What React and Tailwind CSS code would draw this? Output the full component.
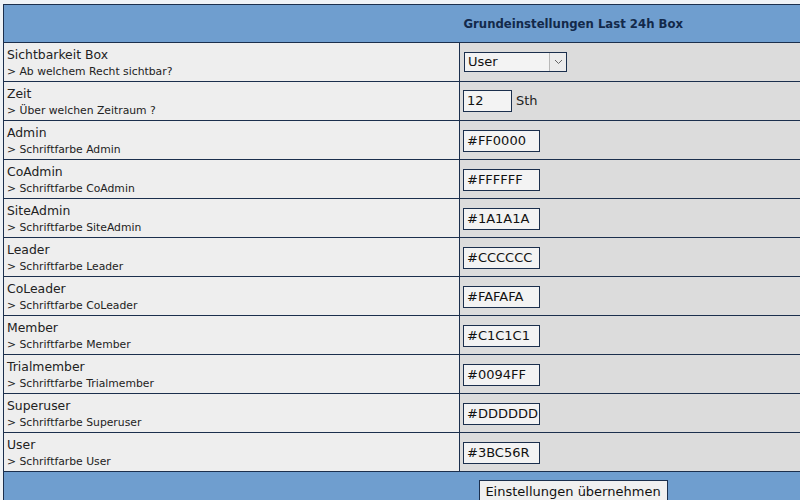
import { useState } from 'react'

const COLORS = [
  ['Admin', '#FF0000'],
  ['CoAdmin', '#FFFFFF'],
  ['SiteAdmin', '#1A1A1A'],
  ['Leader', '#CCCCCC'],
  ['CoLeader', '#FAFAFA'],
  ['Member', '#C1C1C1'],
  ['Trialmember', '#0094FF'],
  ['Superuser', '#DDDDDD'],
  ['User', '#3BC56R'],
]

const Label = ({ title, sub }) => (
  <td className="w-[456px] bg-[#eeeeee] border-t border-r border-[#1b2f4d] px-[3px] align-top pt-[4px] h-[39px]">
    <div className="text-[12.4px] leading-[16px] text-[#222]">{title}</div>
    <div className="text-[10.8px] leading-[17px] text-[#222]">{sub}</div>
  </td>
)

export default function App() {
  const [values, setValues] = useState(Object.fromEntries(COLORS))

  return (
    <div className="w-[800px] h-[500px] overflow-hidden bg-[#eef2f6] pt-[4px] pl-[3px] font-['DejaVu_Sans',Verdana,sans-serif]">
      <table className="w-[797px] border-collapse border-l border-t border-[#1b2f4d]">
        <tbody>
          <tr className="bg-[#6f9ecf] h-[38px]">
            <td className="w-[456px]"></td>
            <td className="text-[11.7px] font-bold text-[#13294a] pl-[4px] pt-[2px]">Grundeinstellungen Last 24h Box</td>
          </tr>
          <tr>
            <Label title="Sichtbarkeit Box" sub="> Ab welchem Recht sichtbar?" />
            <td className="bg-[#dcdcdc] border-t border-[#1b2f4d] px-[3px]">
              <div className="w-[103px] h-[20px] ml-[1px] border border-[#1b2f4d] bg-[#f3f3f3] flex items-center">
                <span className="flex-1 text-[13px] pl-[3px] text-[#111]">User</span>
                <span className="w-[17px] h-[18px] border-l border-[#b8b8b8] bg-[#ececec] flex items-center justify-center">
                  <svg width="9" height="6" viewBox="0 0 9 6" fill="none" stroke="#666" strokeWidth="1">
                    <path d="M1 1l3.5 3.5L8 1" />
                  </svg>
                </span>
              </div>
            </td>
          </tr>
          <tr>
            <Label title="Zeit" sub="> Über welchen Zeitraum ?" />
            <td className="bg-[#dcdcdc] border-t border-[#1b2f4d] px-[3px]">
              <div className="flex items-center gap-[4px]">
                <div className="w-[49px] h-[22px] border border-[#1b2f4d] bg-[#f3f3f3] text-[13px] leading-[20px] pl-[3px] text-[#111]">12</div>
                <span className="text-[13px] text-[#222]">Sth</span>
              </div>
            </td>
          </tr>
          {COLORS.map(([name]) => (
            <tr key={name}>
              <Label title={name} sub={`> Schriftfarbe ${name}`} />
              <td className="bg-[#dcdcdc] border-t border-[#1b2f4d] px-[3px]">
                <input
                  value={values[name]}
                  onChange={(e) => setValues({ ...values, [name]: e.target.value })}
                  className="w-[77px] h-[22px] border border-[#1b2f4d] bg-[#f3f3f3] text-[13px] pl-[3px] text-[#111] outline-none"
                />
              </td>
            </tr>
          ))}
          <tr className="bg-[#6f9ecf] h-[40px]">
            <td className="border-t border-[#1b2f4d]"></td>
            <td className="border-t border-[#1b2f4d] align-top pt-[7px] pl-[19px]">
              <button className="w-[189px] h-[24px] border border-[#1b2f4d] bg-[#f0f0f0] text-[13px] text-[#111]">
                Einstellungen übernehmen
              </button>
            </td>
          </tr>
        </tbody>
      </table>
    </div>
  )
}
